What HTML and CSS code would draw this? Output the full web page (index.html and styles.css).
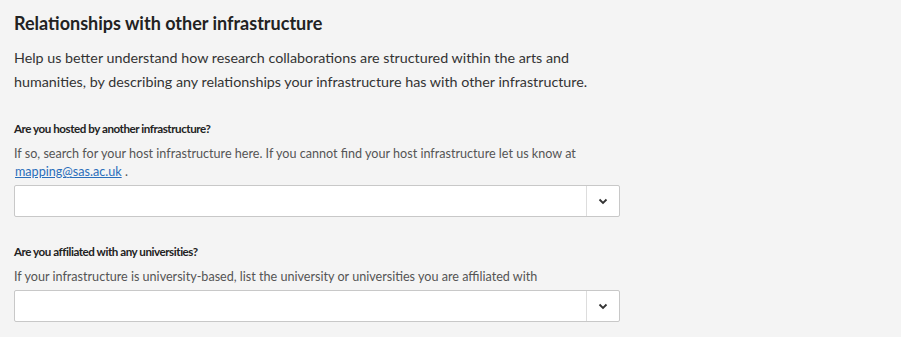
FILE: index.html
```html
<!DOCTYPE html>
<html lang="en">
<head>
  <meta charset="UTF-8">
  <meta name="viewport" content="width=device-width, initial-scale=1.0">
  <title>Relationships with other infrastructure</title>
  <link rel="stylesheet" href="styles.css">
</head>
<body>
  <section class="section">
    <h2>Relationships with other infrastructure</h2>
    <p class="intro">Help us better understand how research collaborations are structured within the arts and<br>humanities, by describing any relationships your infrastructure has with other infrastructure.</p>

    <div class="field">
      <label class="label">Are you hosted by another infrastructure?</label>
      <p class="hint">If so, search for your host infrastructure here. If you cannot find your host infrastructure let us know at<br><a href="#">mapping@sas.ac.uk</a> .</p>
      <div class="select">
        <input type="text">
        <span class="toggle">
          <svg width="10" height="7" viewBox="0 0 10 7"><path d="M1.5 1.5 5 5 8.5 1.5" fill="none" stroke="#333" stroke-width="1.8"/></svg>
        </span>
      </div>
    </div>

    <div class="field">
      <label class="label">Are you affiliated with any universities?</label>
      <p class="hint">If your infrastructure is university-based, list the university or universities you are affiliated with</p>
      <div class="select">
        <input type="text">
        <span class="toggle">
          <svg width="10" height="7" viewBox="0 0 10 7"><path d="M1.5 1.5 5 5 8.5 1.5" fill="none" stroke="#333" stroke-width="1.8"/></svg>
        </span>
      </div>
    </div>
  </section>
</body>
</html>
```

FILE: styles.css
```css
body {
  margin: 0;
  background-color: #f4f4f4;
  font-family: Lato, "Liberation Sans", sans-serif;
  color: #222;
}
.section {
  padding: 10px 14px;
}
h2 {
  margin: 0 0 10px;
  font-size: 18px;
  font-weight: 700;
  line-height: 26px;
}
.intro {
  margin: 0 0 26px;
  font-size: 14.3px;
  line-height: 24px;
  color: #333;
}
.field {
  margin-bottom: 26px;
}
.label {
  display: block;
  font-size: 11.6px;
  font-weight: 700;
  letter-spacing: -0.45px;
  line-height: 18px;
  margin-bottom: 7px;
}
.hint {
  margin: 0 0 4px;
  font-size: 12.6px;
  line-height: 18px;
  color: #555;
}
.hint a {
  color: #2a6ebb;
  margin-left: 1px;
}
.select {
  display: flex;
  width: 604px;
  height: 30px;
  background: #fff;
  border: 1px solid #c8c8c8;
  border-radius: 2px;
}
.select input {
  flex: 1;
  border: none;
  outline: none;
  background: transparent;
  font: inherit;
}
.toggle {
  width: 32px;
  display: flex;
  align-items: center;
  justify-content: center;
  border-left: 1px solid #ddd;
}
```
